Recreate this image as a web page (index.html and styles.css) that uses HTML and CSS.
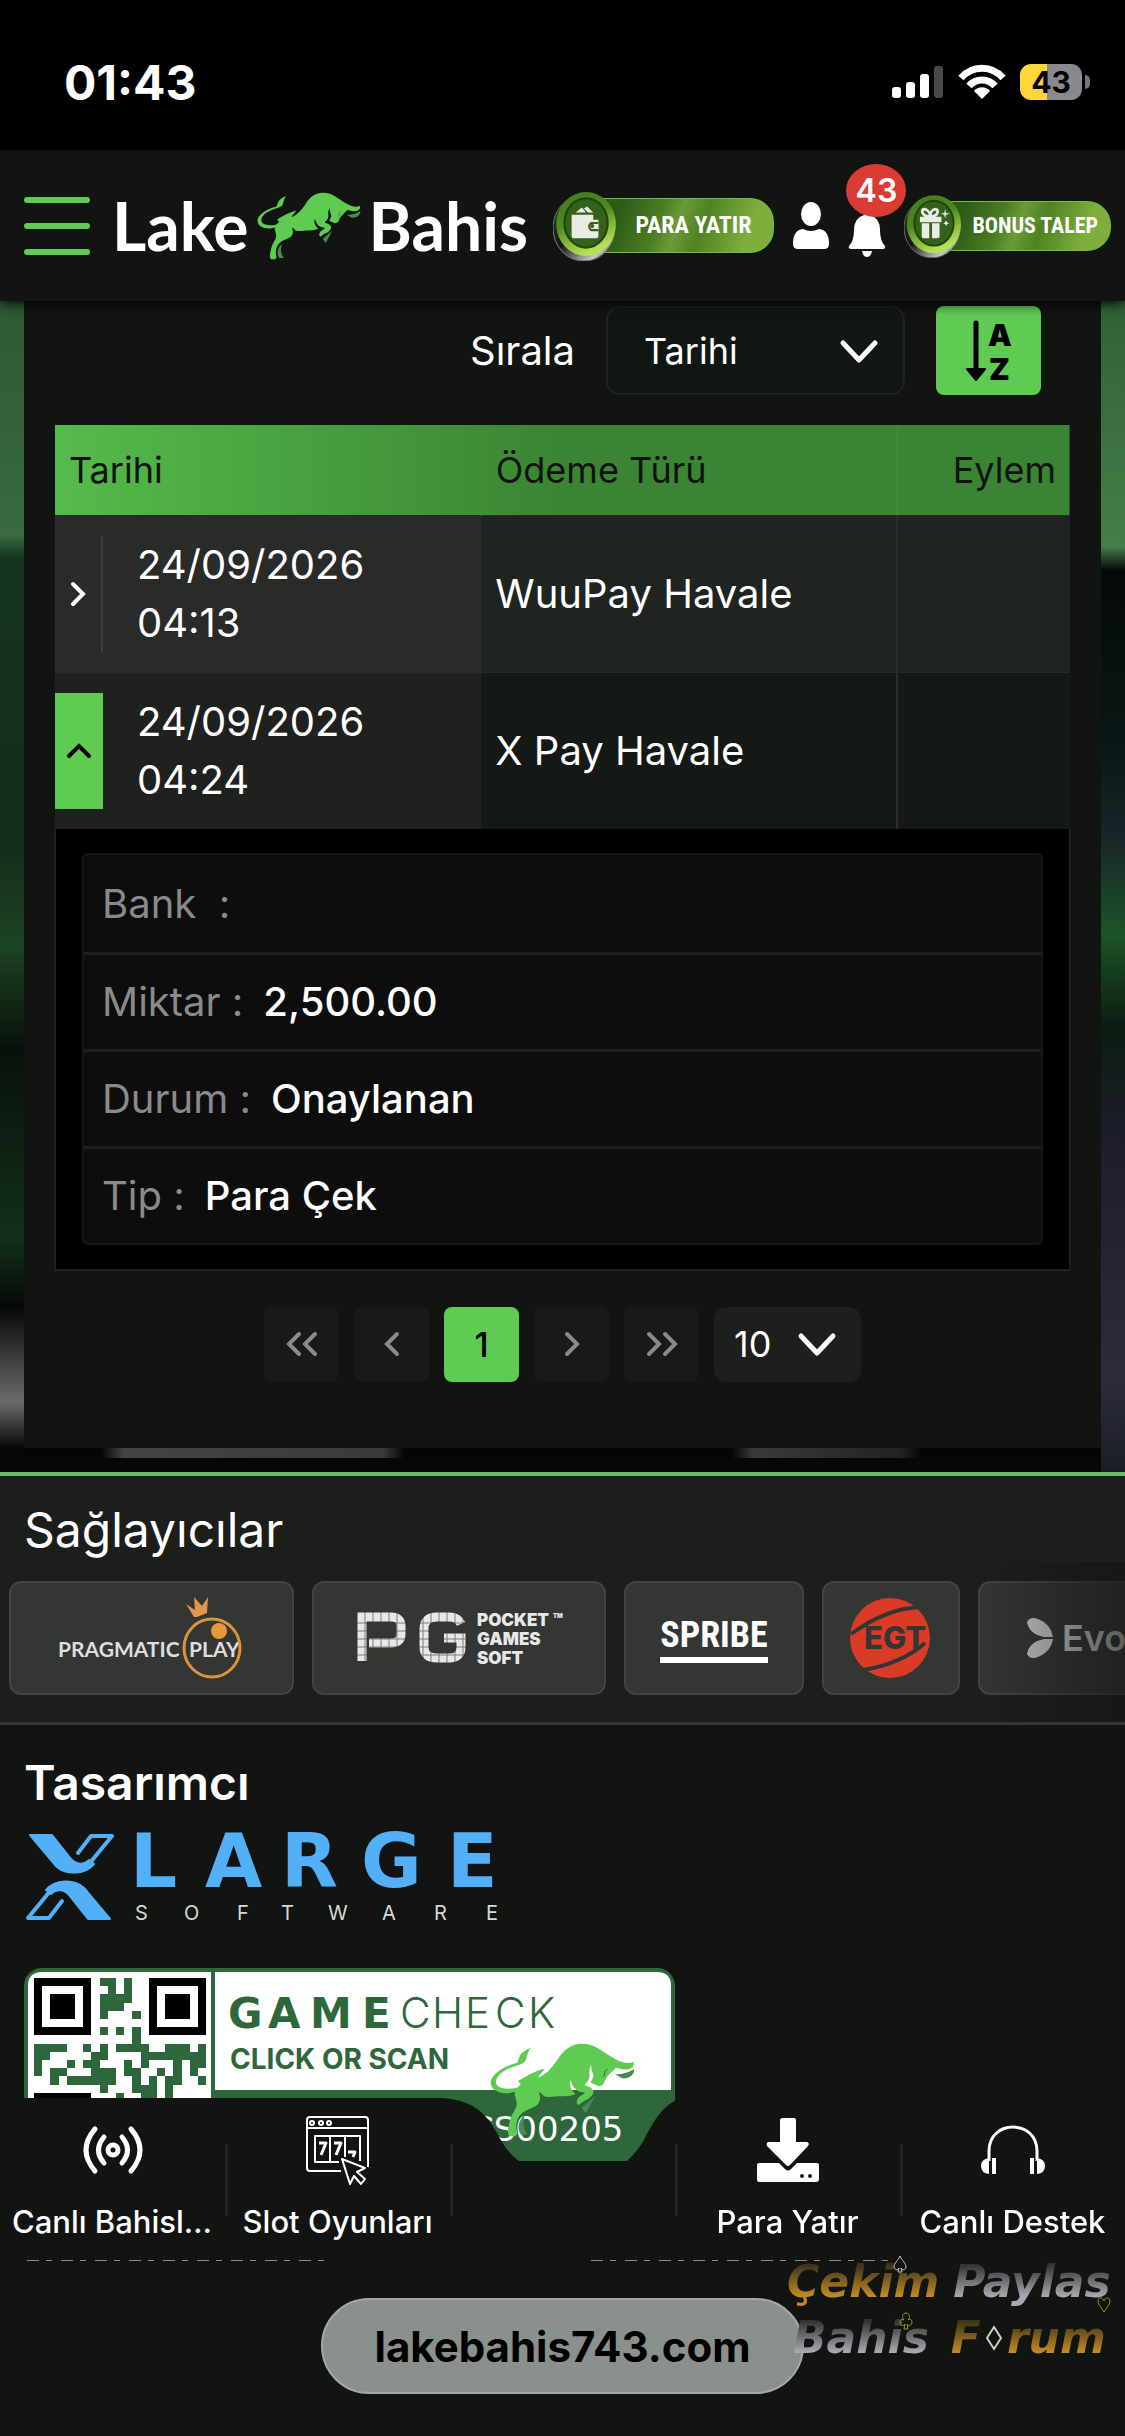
FILE: index.html
```html
<!DOCTYPE html>
<html lang="tr">
  <head>
    <meta charset="UTF-8" />
    <meta name="viewport" content="width=device-width, initial-scale=1.0" />
    <title>Lake Bahis - İşlem Geçmişi</title>
    <link rel="stylesheet" href="styles.css">
  </head>
  <body>
    <!-- shared shapes -->
    <svg class="sprite" aria-hidden="true">
      <symbol id="bull" viewBox="148 128 436 282">
        <g fill="#4b8a4f">
          <path d="M252 345C240 355 224 378 242 404L261 402C250 390 246 375 250 358Z" />
          <path d="M424 322L464 288L436 340Z" />
          <path d="M524 222C545 222 570 215 581 206C583 224 565 236 545 234Z" />
        </g>
        <g fill="#5fcb53">
          <path d="M270 143C258 147 243 156 237 168C234 176 230 184 231 187C200 194 160 213 151 240C146 264 168 281 205 279C222 276 235 270 245 258C225 266 200 268 180 262C163 255 162 240 174 226C187 210 212 200 237 193C248 188 254 186 257 176C259 165 263 152 270 143Z" />
          <path d="M232 242C262 224 285 211 313 204C306 213 298 222 292 232C318 224 338 197 352 176C370 148 392 130 425 130C462 130 484 152 508 166C525 176 540 186 558 188C568 188 575 187 580 184C583 198 574 206 558 207C545 208 536 204 526 202C518 214 500 224 494 240C490 252 484 259 474 257L452 248C450 240 462 234 458 222C455 212 450 205 454 194C443 206 448 220 447 230C446 240 440 246 434 250L434 256C445 258 460 264 459 275C457 290 437 300 430 302L414 314C407 310 407 300 414 292C422 284 434 282 432 276C410 276 395 262 391 238C385 255 392 272 405 280C395 288 370 288 350 288C335 290 322 292 310 288C304 282 302 276 294 276C302 290 299 305 290 314C275 324 250 330 238 345C228 358 224 375 230 400L225 408L206 408C198 395 204 380 207 365C210 345 225 330 228 315C230 300 222 290 222 275C226 262 240 256 240 250Z" />
        </g>
        <path d="M501 207C494 210 491 216 493 224L488 229" fill="none" stroke="#2d673b" stroke-width="3" />
      </symbol>
      <symbol id="chevron" viewBox="0 0 40 26">
        <path d="M4 4L20 21L36 4" fill="none" stroke="currentColor" stroke-width="5" stroke-linecap="round" stroke-linejoin="round" />
      </symbol>
      <linearGradient id="ring" x1="0" y1="0" x2="0.4" y2="1">
        <stop offset="0" stop-color="#3f7a1b" />
        <stop offset="0.5" stop-color="#4d8a1f" />
        <stop offset="1" stop-color="#b5e255" />
      </linearGradient>
      <linearGradient id="metal" x1="0" y1="0" x2="1" y2="1">
        <stop offset="0" stop-color="#2c4a1a" />
        <stop offset="0.45" stop-color="#141414" />
        <stop offset="0.8" stop-color="#c9c9c9" />
        <stop offset="1" stop-color="#222222" />
      </linearGradient>
      <symbol id="coin" viewBox="0 0 62 68">
        <ellipse cx="30" cy="36" rx="30" ry="32" fill="url(#metal)" stroke="#6d6d6d" stroke-width="1" />
        <ellipse cx="32" cy="32" rx="29" ry="31" fill="url(#ring)" />
        <ellipse cx="32" cy="31" rx="21" ry="24" fill="#35611a" stroke="#23420f" stroke-width="2" />
      </symbol>
    </svg>

    <div class="status-bar">
      <span class="clock">01:43</span>
      <div class="status-icons">
        <svg width="52" height="34" viewBox="0 0 52 34">
          <g fill="#fff">
            <rect x="0" y="22" width="9" height="11" rx="3" />
            <rect x="14" y="17" width="9" height="16" rx="3" />
            <rect x="28" y="9" width="9" height="24" rx="3" />
          </g>
          <rect x="42" y="1" width="9" height="32" rx="3" fill="#48484a" />
        </svg>
        <svg width="48" height="36" viewBox="0 0 48 36">
          <g fill="none" stroke="#fff" stroke-width="7">
            <path d="M3 14C14 1 34 1 45 14" />
            <path d="M11 22C18 14 30 14 37 22" />
          </g>
          <path d="M24 35L16 27C20 22 28 22 32 27Z" fill="#fff" />
        </svg>
        <div class="battery"><span>43</span></div>
      </div>
    </div>

    <header class="site-header">
      <button class="menu-btn" type="button" aria-label="Menü"><i></i><i></i><i></i></button>
      <a class="brand" href="#">
        <span>Lake</span>
        <svg width="104" height="70"><use href="#bull" /></svg>
        <span>Bahis</span>
      </a>
      <a class="promo" href="#">
        <svg class="coin" width="64" height="70" viewBox="0 0 62 68">
          <use href="#coin" width="62" height="68" />
          <path d="M18 23H39V28H44V44Q44 46 42 46H20Q18 46 18 43Z" fill="#e9ece6" />
          <path d="M22 21L28 16L32 21ZM30 17L33 15L39 21H34Z" fill="#e9ece6" />
          <path d="M44 31H37Q33 34 37 38H44" fill="#e9ece6" stroke="#35611a" stroke-width="2" />
          <circle cx="38" cy="34" r="2" fill="#35611a" />
        </svg>
        <span class="promo-label">PARA YATIR</span>
      </a>
      <a class="icon-link" href="#" aria-label="Profil">
        <svg width="38" height="48" viewBox="0 0 38 48">
          <g fill="#fff">
            <ellipse cx="19" cy="12" rx="10" ry="12" />
            <path d="M11 27Q19 31 27 27Q37 28 37 42Q37 47 32 47H6Q1 47 1 42Q1 28 11 27Z" />
          </g>
        </svg>
      </a>
      <a class="icon-link bell" href="#" aria-label="Bildirimler">
        <svg width="38" height="46" viewBox="0 0 38 46">
          <path d="M19 0Q22 0 22 3Q32 6 32 18Q32 29 37 34Q38 37 35 37H3Q0 37 1 34Q6 29 6 18Q6 6 16 3Q16 0 19 0ZM14 39H24Q23 45 19 45Q15 45 14 39Z" fill="#fff" />
        </svg>
        <span class="count">43</span>
      </a>
      <a class="promo promo-small" href="#">
        <svg class="coin" width="58" height="64" viewBox="0 0 62 68">
          <use href="#coin" width="62" height="68" />
          <g fill="#e9ece6">
            <path d="M17 24H40V30H17ZM19 31H27V47H21Q19 47 19 45ZM30 31H38V45Q38 47 36 47H30Z" />
            <path d="M44 16L45 20L49 21L45 22L44 26L43 22L39 21L43 20ZM45 28L46 30L48 31L46 32L45 34L44 32L42 31L44 30Z" />
          </g>
          <path d="M28 24C18 24 18 15 22 16C26 17 28 21 28 24C28 20 30 16 34 16C38 17 36 24 28 24" fill="none" stroke="#e9ece6" stroke-width="3" />
        </svg>
        <span class="promo-label">BONUS TALEP</span>
      </a>
    </header>

    <main class="stage">
      <section class="history">
        <form class="sort-row">
          <label for="sort">Sırala</label>
          <div class="select-box sort-select">
            <select id="sort"><option>Tarihi</option></select>
            <svg width="40" height="26"><use href="#chevron" /></svg>
          </div>
          <button class="sort-btn" type="button" aria-label="A'dan Z'ye sırala">
            <svg width="46" height="62" viewBox="0 0 46 62">
              <path d="M10 3V51" stroke="#000" stroke-width="5" stroke-linecap="round" />
              <path d="M1 49H19L10 60Z" fill="#000" stroke="#000" stroke-width="2" stroke-linejoin="round" />
              <text x="22" y="26">A</text>
              <text x="23" y="60">Z</text>
            </svg>
          </button>
        </form>

        <table class="payments">
          <thead>
            <tr>
              <th class="col-date">Tarihi</th>
              <th class="col-type">Ödeme Türü</th>
              <th class="col-action">Eylem</th>
            </tr>
          </thead>
          <tbody>
            <tr class="row-odd">
              <td>
                <div class="date-cell">
                  <button class="toggle" type="button" aria-label="Aç">
                    <svg width="18" height="28" viewBox="0 0 18 28"><path d="M4 4L14 14L4 24" /></svg>
                  </button>
                  <span>24/09/2026<br>04:13</span>
                </div>
              </td>
              <td class="type">WuuPay Havale</td>
              <td></td>
            </tr>
            <tr class="row-even">
              <td>
                <div class="date-cell">
                  <button class="toggle open" type="button" aria-label="Kapat">
                    <svg width="28" height="18" viewBox="0 0 28 18"><path d="M4 14L14 4L24 14" /></svg>
                  </button>
                  <span>24/09/2026<br>04:24</span>
                </div>
              </td>
              <td class="type">X Pay Havale</td>
              <td></td>
            </tr>
            <tr>
              <td class="detail" colspan="3">
                <dl>
                  <div><dt>Bank &nbsp;:</dt><dd></dd></div>
                  <div><dt>Miktar :</dt><dd>2,500.00</dd></div>
                  <div><dt>Durum :</dt><dd>Onaylanan</dd></div>
                  <div><dt>Tip :</dt><dd>Para Çek</dd></div>
                </dl>
              </td>
            </tr>
          </tbody>
        </table>

        <div class="pager">
          <button type="button" aria-label="İlk"><svg width="34" height="26" viewBox="0 0 34 26"><path d="M14 3L4 13L14 23M30 3L20 13L30 23" /></svg></button>
          <button type="button" aria-label="Önceki"><svg width="18" height="26" viewBox="0 0 18 26"><path d="M14 3L4 13L14 23" /></svg></button>
          <button type="button" class="current">1</button>
          <button type="button" aria-label="Sonraki"><svg width="18" height="26" viewBox="0 0 18 26"><path d="M4 3L14 13L4 23" /></svg></button>
          <button type="button" aria-label="Son"><svg width="34" height="26" viewBox="0 0 34 26"><path d="M4 3L14 13L4 23M20 3L30 13L20 23" /></svg></button>
          <div class="select-box page-size">
            <select aria-label="Sayfa boyutu"><option>10</option></select>
            <svg width="40" height="26"><use href="#chevron" /></svg>
          </div>
        </div>
      </section>
    </main>

    <section class="providers">
      <h2>Sağlayıcılar</h2>
      <div class="provider-list">
        <a class="provider pragmatic" href="#">
          <svg width="188" height="82" viewBox="0 0 188 82">
            <text x="0" y="60" class="pr-text">PRAGMATIC</text>
            <text x="131" y="60" class="pr-text">PLAY</text>
            <ellipse cx="154" cy="51" rx="28" ry="29" fill="none" stroke="#d8933c" stroke-width="3" />
            <circle cx="161" cy="34" r="8" fill="#e8983a" />
            <path d="M136 20L128 7L137 13L136 0L144 9L150 0L149 16L139 20Z" fill="#e39549" />
          </svg>
        </a>
        <a class="provider pg" href="#">
          <svg width="204" height="54" viewBox="0 0 204 54">
            <path d="M5 50V6H34Q44 6 44 15V23Q44 32 34 32H12" class="pg-mark" />
            <path d="M104 13Q101 6 92 6H80Q67 6 67 18V36Q67 47 80 47H92Q104 47 104 36V27H87" class="pg-mark" />
            <path d="M0 12H110M0 20H110M0 28H110M0 36H110M0 44H110M8 0V54M16 0V54M24 0V54M32 0V54M40 0V54M66 0V54M74 0V54M82 0V54M90 0V54M98 0V54M106 0V54" stroke="#343633" stroke-width="1" opacity="0.6" />
            <text x="120" y="15">POCKET</text>
            <text x="120" y="34">GAMES</text>
            <text x="120" y="53">SOFT</text>
            <text x="196" y="7" class="tm">TM</text>
          </svg>
        </a>
        <a class="provider spribe" href="#">
          <span>SPRIBE</span>
        </a>
        <a class="provider egt" href="#">
          <svg width="84" height="84" viewBox="0 0 84 84">
            <circle cx="41" cy="42" r="40" fill="#d93b27" />
            <path d="M2 38Q38 12 72 11M14 74Q52 68 76 47" fill="none" stroke="#343633" stroke-width="4" />
            <text x="15" y="53">EGT</text>
          </svg>
        </a>
        <a class="provider evolution" href="#">
          <svg width="28" height="42" viewBox="0 0 28 42">
            <path d="M1 5Q4 -1 12 2Q25 7 27 20H18Q3 17 1 5ZM1 37Q4 43 12 40Q25 35 27 22H18Q3 25 1 37Z" fill="#c9cbc9" />
          </svg>
          <span>Evolution</span>
        </a>
      </div>
    </section>

    <footer class="site-footer">
      <h2>Tasarımcı</h2>
      <a class="xlarge" href="#" aria-label="XLarge Software">
        <svg width="478" height="88" viewBox="0 0 478 88">
          <g id="xhalf">
            <path d="M3 1H25L44 25C49 31 57 31 62 26L67 30C58 41 38 41 29 32Z" fill="#52b0f8" stroke="#52b0f8" stroke-width="2" stroke-linejoin="round" />
            <path d="M51 19L64 2H85L62 30" fill="none" stroke="#52b0f8" stroke-width="4" stroke-linecap="round" stroke-linejoin="round" />
          </g>
          <use href="#xhalf" transform="rotate(180 43 43)" />
          <text class="xl-name" x="103 178 254 334 420" y="53">LARGE</text>
          <text class="xl-sub" x="108 157 210 254 301 355 407 459" y="86">SOFTWARE</text>
        </svg>
      </a>
      <a class="gamecheck" href="#" aria-label="GameCheck">
        <svg width="651" height="210" viewBox="0 0 651 210">
          <rect width="651" height="210" rx="18" fill="#2d673b" />
          <path d="M4 200V18Q4 4 18 4H187V200Z" fill="#fff" />
          <path d="M191 4H633Q647 4 647 18V122H191Z" fill="#fff" />
          <!-- one unit per QR module -->
          <g transform="translate(10 10) scale(8.2)" shape-rendering="crispEdges">
            <path d="M0 0H7V7H0ZM14 0H21V7H14ZM0 14H7V21H0Z" fill="#000" />
            <path d="M1 1H6V6H1ZM15 1H20V6H15Z" fill="#fff" />
            <path d="M2 2H5V5H2ZM16 2H19V5H16Z" fill="#000" />
            <path fill="#2d673b" d="M8 0h2v1h-2zM11 0h1v1h-1zM9 1h1v1h-1zM11 1h1v1h-1zM8 2h4v1h-4zM8 3h3v1h-3zM8 4h1v1h-1zM12 4h1v1h-1zM8 6h1v1h-1zM10 6h1v1h-1zM12 6h1v2h-1zM0 8h4v1h-4zM6 8h1v1h-1zM8 8h1v1h-1zM10 8h4v1h-4zM16 8h3v1h-3zM20 8h1v1h-1zM0 9h2v1h-2zM7 9h2v1h-2zM13 9h8v1h-8zM0 10h1v2h-1zM4 10h1v1h-1zM6 10h2v1h-2zM11 10h1v1h-1zM13 10h1v1h-1zM17 10h1v1h-1zM19 10h2v1h-2zM2 11h2v1h-2zM7 11h3v1h-3zM11 11h2v1h-2zM15 11h1v1h-1zM17 11h1v1h-1zM19 11h1v1h-1zM2 12h1v1h-1zM4 12h6v1h-6zM12 12h1v1h-1zM14 12h1v1h-1zM16 12h2v1h-2zM20 12h1v1h-1zM8 13h1v1h-1zM12 13h3v1h-3zM16 13h1v1h-1zM10 14h1v1h-1zM13 14h2v1h-2zM16 14h1v1h-1z" />
          </g>
          <text class="gc-bold" x="204 244 286 338" y="60">GAME</text>
          <text class="gc-thin" x="376 408 441 471 504" y="60">CHECK</text>
          <text class="gc-sub" x="206" y="101">CLICK OR SCAN</text>
          <text class="gc-code" x="446" y="173">CS00205</text>
        </svg>
      </a>
    </footer>

    <div class="dock">
      <div class="dock-shape">
        <div></div>
        <svg width="244" height="338" viewBox="0 0 244 338">
          <path d="M0 0C40 2 50 24 61 44Q68 56 78 63H186Q196 54 203 42C212 24 224 2 244 0V338H0Z" fill="#111411" />
        </svg>
        <div></div>
      </div>
      <nav class="dock-nav">
        <a href="#">
          <svg width="60" height="48" viewBox="0 0 60 48">
            <g fill="none" stroke="#fff" stroke-width="5" stroke-linecap="round">
              <circle cx="30" cy="24" r="5" />
              <path d="M12 3Q-6 24 12 45M21 11Q10 24 21 37M48 3Q66 24 48 45M39 11Q50 24 39 37" />
            </g>
          </svg>
          <span>Canlı Bahisleri</span>
        </a>
        <a href="#">
          <svg width="66" height="70" viewBox="0 0 66 70">
            <g fill="none" stroke="#fff" stroke-width="2" stroke-linejoin="round">
              <path d="M36 56H5Q2 56 2 53V5Q2 2 5 2H60Q63 2 63 5V52M2 13H63" />
              <circle cx="7" cy="8" r="2" /><circle cx="16" cy="8" r="2" /><circle cx="24" cy="8" r="2" />
              <path d="M34 47H10V21H55V46M25 21V47M40 21V42" />
              <path d="M14 28H21L16 40M29 28H36L31 40M43 37H50L48 42" stroke-width="3" />
              <path d="M37 44L60 53L52 57L60 64L56 69L49 61L45 69Z" />
            </g>
          </svg>
          <span>Slot Oyunları</span>
        </a>
        <a class="home" href="#" aria-label="Ana sayfa">
          <svg width="145" height="94"><use href="#bull" /></svg>
        </a>
        <a href="#">
          <svg width="64" height="66" viewBox="0 0 64 66">
            <path d="M27 1H38Q40 1 40 3V25H51Q54 26 52 29L34 48Q32 50 30 48L11 29Q10 26 12 25H24V3Q24 1 27 1Z" fill="#fff" />
            <path d="M3 46H23L29 52Q32 55 35 52L41 46H61Q63 46 63 48V62Q63 65 60 65H3Q1 65 1 62V48Q1 46 3 46Z" fill="#fff" />
            <circle cx="46" cy="59" r="2" fill="#111411" /><circle cx="54" cy="59" r="2" fill="#111411" />
          </svg>
          <span>Para Yatır</span>
        </a>
        <a href="#">
          <svg width="66" height="50" viewBox="0 0 66 50">
            <path d="M9 36V26C9 -6 57 -6 57 26V36" fill="none" stroke="#fff" stroke-width="3" />
            <path d="M9 33Q1 34 1 41Q1 48 9 49ZM12 33H16V49H12ZM57 33Q65 34 65 41Q65 48 57 49ZM50 33H54V49H50Z" fill="#fff" />
          </svg>
          <span>Canlı Destek</span>
        </a>
      </nav>
      <div class="peek"><i></i><i></i></div>
      <div class="url-bar"><button type="button">lakebahis743.com</button></div>
      <div class="forum-mark">
        <p><span class="gold">Çekim</span><span class="silver">Paylas</span></p>
        <p class="forum-line">
          <span class="silver">Bahis</span>
          <span class="gold forum-f">F</span>
          <svg width="18" height="26" viewBox="0 0 18 26"><path d="M9 2L16 13L9 24L2 13Z" fill="none" stroke="#d9c9c9" stroke-width="2" /></svg>
          <span class="gold">rum</span>
        </p>
        <svg class="suit spade" width="14" height="18" viewBox="0 0 14 18"><path d="M7 1C9 6 13 8 13 12C13 15 9 16 8 13L9 17H5L6 13C5 16 1 15 1 12C1 8 5 6 7 1Z" /></svg>
        <svg class="suit club" width="14" height="18" viewBox="0 0 14 18"><path d="M8 12L9 17H5L6 12C4 15 1 13 1 10C1 7 4 7 5 8C2 5 4 1 7 1C10 1 12 5 9 8C10 7 13 7 13 10C13 13 10 15 8 12Z" /></svg>
        <svg class="suit heart" width="14" height="18" viewBox="0 0 14 18"><path d="M7 16C5 12 1 9 1 5C1 1 6 1 7 5C8 1 13 1 13 5C13 9 9 12 7 16Z" /></svg>
      </div>
    </div>
  </body>
</html>
```

FILE: styles.css
```css
* {
  box-sizing: border-box;
}

body {
  margin: 0;
  min-height: 100vh;
  display: flex;
  flex-direction: column;
  background-color: #111411;
  color: white;
  font-family: "Inter", sans-serif;
  font-size: 40px;
  overflow-x: hidden;
}

a {
  color: inherit;
  text-decoration: none;
}

button,
select {
  font: inherit;
  color: inherit;
  border: none;
  padding: 0;
  cursor: pointer;
}

svg {
  display: block;
  flex-shrink: 0;
  overflow: visible;
}

h2,
p {
  margin: 0;
}

.sprite {
  position: absolute;
  width: 0;
  height: 0;
}

/* Phone status bar */
.status-bar {
  height: 150px;
  padding: 14px 36px 0 64px;
  background: black;
  display: flex;
  justify-content: space-between;
  align-items: center;
}

.clock {
  font-size: 48px;
  font-weight: 700;
}

.status-icons {
  display: flex;
  align-items: center;
  gap: 14px;
}

.battery {
  position: relative;
  width: 62px;
  height: 36px;
  margin-right: 7px;
  border-radius: 11px;
  background: linear-gradient(90deg, #fdd63c 43%, #8a8a8e 43%);
  color: black;
  font-size: 30px;
  font-weight: 700;
  line-height: 36px;
  text-align: center;
}

.battery::after {
  content: "";
  position: absolute;
  right: -8px;
  top: 11px;
  width: 5px;
  height: 14px;
  border-radius: 0 6px 6px 0;
  background: #77777a;
}

/* Header */
.site-header {
  position: relative;
  z-index: 1;
  height: 151px;
  padding: 0 14px 0 24px;
  background: #111411;
  box-shadow: 0 2px 12px black;
  display: flex;
  align-items: center;
}

.menu-btn {
  width: 66px;
  flex-shrink: 0;
  background: none;
  display: flex;
  flex-direction: column;
  gap: 20px;
}

.menu-btn i {
  height: 6px;
  border-radius: 3px;
  background: #5fcb53;
}

.brand {
  margin-left: 22px;
  display: flex;
  align-items: center;
  gap: 8px;
  font-family: "Lato", sans-serif;
  font-size: 66px;
  font-weight: 700;
  line-height: 80px;
}

.promo {
  display: flex;
  align-items: center;
  margin-left: auto;
}

.coin {
  position: relative;
  z-index: 1;
  margin-right: -36px;
}

.promo-label {
  height: 55px;
  padding: 0 22px 0 54px;
  border-radius: 0 24px 24px 0;
  border: 1px solid #6fc04a;
  border-left: none;
  background: linear-gradient(110deg, #2f5a18 20%, #4a7d22 40%, #6b9a38 50%, #4f8222 62%, #7fae3c 85%);
  font-family: "Roboto Condensed", "Liberation Sans Narrow", "Liberation Sans", sans-serif;
  font-size: 24px;
  font-weight: 700;
  line-height: 53px;
  white-space: nowrap;
}

.promo-small {
  margin-left: 18px;
}

.promo-small .promo-label {
  height: 50px;
  padding: 0 12px 0 46px;
  font-size: 22px;
  line-height: 48px;
}

.icon-link {
  position: relative;
  margin-left: 18px;
}

.bell {
  padding-top: 18px;
}

.count {
  position: absolute;
  left: -2px;
  bottom: 41px;
  width: 60px;
  height: 53px;
  border-radius: 50%;
  background: #da3b32;
  font-size: 32px;
  font-weight: 600;
  line-height: 53px;
  text-align: center;
}

/* Payment history */
.stage {
  padding: 0 24px 24px;
  background:
    linear-gradient(#2c5a32, #3a6a42 20%, #15351f 22%, #142c1b 46%, #1d4322 55%, #08110b 64%, #12301b 80%, #050805 86%, #6b6c69 94%, #050805 98%) left / 24px 100% no-repeat,
    linear-gradient(#2f6136, #477d4a 21%, #050a06 23%, #0a1716 38%, #18262a 46%, #1d5427 54%, #0c1c11 62%, #1d1d2c 72%, #2c2b3c 92%, #1b1e25) right / 24px 100% no-repeat,
    linear-gradient(90deg, #050505 9%, #444 11%, #3a3a3a 34%, #050505 36%, #050505 65%, #3a3a3a 67%, #222 80%, #050505 82%) left bottom 14px / 100% 10px no-repeat,
    #050805;
}

.history {
  padding: 5px 30px 66px;
  background: #111411;
}

.sort-row {
  display: flex;
  justify-content: flex-end;
  align-items: center;
  gap: 31px;
  margin: 0 30px 30px 0;
}

.select-box {
  position: relative;
}

.select-box select {
  width: 100%;
  height: 100%;
  appearance: none;
  background: none;
}

.select-box svg {
  position: absolute;
  top: 50%;
  margin-top: -12px;
  pointer-events: none;
}

.sort-select {
  width: 299px;
  height: 89px;
  border: 2px solid #1e231f;
  border-radius: 14px;
  background: #101611;
}

.sort-select select {
  padding-left: 36px;
  font-size: 36px;
}

.sort-select svg {
  right: 24px;
}

.sort-btn {
  width: 105px;
  height: 89px;
  border-radius: 8px;
  background: #5fcb53;
  display: flex;
  justify-content: center;
  align-items: center;
}

.sort-btn text {
  font-size: 30px;
  font-weight: 900;
}

.payments {
  width: 100%;
  table-layout: fixed;
  border-collapse: collapse;
}

.payments thead {
  background: linear-gradient(90deg, #55bb4b, #3b8433 50%);
}

.payments th {
  height: 90px;
  padding: 0 14px;
  color: #101410;
  font-size: 36px;
  font-weight: 400;
  text-align: left;
}

.payments th + th {
  border-left: 1px solid #438f3b;
}

.payments .col-date {
  width: 42%;
}

.payments .col-action {
  width: 17%;
  text-align: right;
}

.payments td {
  padding: 0;
}

.row-odd {
  background: #202421;
}

.row-odd td:first-child {
  background: #292b28;
}

.row-even {
  background: #151915;
}

.row-even td:first-child {
  background: #1f211e;
}

.row-odd td,
.row-even td {
  border-top: 1px solid #272a27;
}

.payments td:nth-child(3) {
  border-left: 2px solid #2a2d2a;
}

.payments .type {
  padding-left: 14px;
}

.date-cell {
  padding: 20px 0;
  display: flex;
  gap: 34px;
  font-size: 40px;
  line-height: 58px;
}

.toggle {
  width: 48px;
  border-right: 2px solid #3c3f3c;
  background: none;
  display: flex;
  justify-content: center;
  align-items: center;
}

.toggle svg,
.pager button svg {
  fill: none;
  stroke: currentColor;
  stroke-width: 4;
  stroke-linecap: round;
}

.toggle.open {
  border: none;
  background: #5fcb53;
  color: black;
}

.payments .detail {
  padding: 24px 26px;
  border: 2px solid #1f211f;
  border-top: none;
  background: black;
}

.detail dl {
  margin: 0;
  border: 2px solid #171717;
  border-radius: 6px;
  background: #0d0d0d;
}

.detail dl div {
  height: 97px;
  padding: 0 18px;
  display: flex;
  align-items: center;
  gap: 20px;
}

.detail dl div + div {
  border-top: 3px solid #1e1e1e;
}

.detail dt {
  color: #8a8a8a;
}

.detail dd {
  margin: 0;
  font-weight: 500;
}

.pager {
  margin-top: 36px;
  display: flex;
  justify-content: center;
  gap: 15px;
}

.pager button {
  width: 75px;
  height: 75px;
  border-radius: 8px;
  background: #171a17;
  color: #8a8a8a;
  display: flex;
  justify-content: center;
  align-items: center;
}

.pager .current {
  background: #5fcb53;
  color: black;
  font-size: 34px;
  font-weight: 500;
}

.page-size {
  width: 147px;
  height: 75px;
  border-radius: 12px;
  background: #1d1f1d;
}

.page-size select {
  padding-left: 20px;
  font-size: 36px;
}

.page-size svg {
  right: 24px;
}

/* Providers */
.providers {
  padding-top: 22px;
  border-top: 4px solid #69bb68;
  border-bottom: 3px solid #343633;
  background: #1c1e1b;
}

.providers h2 {
  padding-left: 24px;
  font-size: 48px;
  font-weight: 400;
  line-height: 64px;
}

.provider-list {
  position: relative;
  overflow: hidden;
  padding: 19px 0 27px 9px;
  display: flex;
  gap: 18px;
}

.provider-list::after {
  content: "";
  position: absolute;
  right: 0;
  top: 0;
  bottom: 0;
  width: 150px;
  background: linear-gradient(90deg, transparent, rgba(17, 20, 17, 0.6));
}

.provider {
  flex-shrink: 0;
  height: 114px;
  border: 2px solid #424441;
  border-radius: 12px;
  background: #343633;
  display: flex;
  justify-content: center;
  align-items: center;
}

.pragmatic {
  width: 285px;
}

.pr-text {
  fill: #dedede;
  font-size: 21px;
  font-family: "Lato", sans-serif;
  font-weight: 700;
}

.pg {
  width: 294px;
}

.pg-mark {
  fill: none;
  stroke: #e8e8e8;
  stroke-width: 9;
}

.pg text {
  fill: #e8e8e8;
  font-size: 17px;
  font-weight: 900;
}

.pg .tm {
  font-size: 6px;
}

.spribe {
  width: 180px;
}

.spribe span {
  border-bottom: 6px solid white;
  font-family: "Roboto Condensed", "Liberation Sans Narrow", "Liberation Sans", sans-serif;
  font-size: 36px;
  font-weight: 700;
  line-height: 44px;
}

.egt {
  width: 138px;
}

.egt text {
  fill: #343633;
  font-size: 31px;
  font-weight: 800;
}

.evolution {
  width: 260px;
  padding-left: 46px;
  justify-content: flex-start;
  gap: 8px;
  color: #c9cbc9;
  font-size: 36px;
  font-weight: 600;
}

/* Footer */
.site-footer {
  flex: 1;
  padding: 26px 24px 0;
}

.site-footer h2 {
  font-size: 48px;
  font-weight: 600;
  line-height: 64px;
}

.xlarge {
  display: block;
  width: 478px;
  margin: 19px 0 0 3px;
}

.xl-name {
  fill: #52b0f8;
  font-family: "DejaVu Sans", sans-serif;
  font-size: 74px;
  font-weight: 700;
}

.xl-sub {
  fill: #d8d8d8;
  font-size: 20px;
}

.gamecheck {
  display: block;
  width: 651px;
  margin-top: 46px;
}

.gc-bold,
.gc-thin,
.gc-sub {
  fill: #2d673b;
  font-size: 42px;
}

.gc-bold {
  font-family: "DejaVu Sans", sans-serif;
  font-weight: 700;
}

.gc-thin {
  font-weight: 300;
}

.gc-sub {
  font-size: 28px;
  font-weight: 700;
}

.gc-code {
  fill: white;
  font-family: "DejaVu Sans", sans-serif;
  font-size: 34px;
}

/* Bottom dock, lies over the footer */
.dock {
  position: fixed;
  left: 0;
  right: 0;
  bottom: 0;
  z-index: 2;
  height: 338px;
}

.dock-shape {
  position: absolute;
  inset: 0;
  display: grid;
  grid-template-columns: 1fr 244px 1fr;
}

.dock-shape div {
  background: #111411;
}

.dock-nav {
  position: relative;
  height: 162px;
  display: grid;
  grid-template-columns: repeat(5, 1fr);
}

.dock-nav a {
  position: relative;
  min-width: 0;
  height: 144px;
  padding: 0 12px;
  display: grid;
  grid-template-rows: 104px 40px;
  grid-template-columns: 100%;
  place-items: center;
  font-size: 31px;
  font-weight: 500;
  line-height: 40px;
}

.dock-nav a + a::before {
  content: "";
  position: absolute;
  left: 0;
  top: 46px;
  width: 3px;
  height: 72px;
  background: #212421;
}

.dock-nav span {
  max-width: 100%;
  overflow: hidden;
  text-overflow: ellipsis;
  white-space: nowrap;
}

.home svg {
  position: absolute;
  left: 40px;
  top: -55px;
}

.peek {
  position: relative;
  display: flex;
  gap: 264px;
  padding-left: 27px;
}

.peek i {
  width: 300px;
  height: 1px;
  background: repeating-linear-gradient(90deg, #8a8c8a 0 12px, #111411 12px 19px, #8a8c8a 19px 25px, #111411 25px 34px);
}

.url-bar {
  position: relative;
  margin-top: 37px;
  display: flex;
  justify-content: center;
}

.url-bar button {
  height: 96px;
  padding: 0 52px;
  border-radius: 48px;
  border: 2px solid #a3aaa4;
  background: #8a908b;
  color: black;
  font-size: 42px;
  font-weight: 700;
}

.forum-mark {
  position: absolute;
  right: 4px;
  top: 156px;
  width: 334px;
  font-family: "DejaVu Sans", sans-serif;
  font-size: 44px;
  font-style: italic;
  font-weight: 700;
  line-height: 56px;
}

.forum-mark p {
  display: flex;
  align-items: center;
  gap: 14px;
}

.forum-mark .forum-line {
  padding-left: 6px;
  gap: 4px;
}

.forum-f {
  margin-left: 18px;
}

.gold,
.silver {
  background: linear-gradient(#3d3318 20%, #c08a26 75%);
  -webkit-background-clip: text;
  background-clip: text;
  color: transparent;
}

.silver {
  background-image: linear-gradient(#343436 20%, #aba6b0 75%);
}

.suit {
  position: absolute;
  fill: none;
  stroke: #9c9c14;
}

.spade {
  left: 106px;
  top: 1px;
  stroke: #d0c4c4;
}

.club {
  left: 112px;
  top: 58px;
}

.heart {
  right: 10px;
  top: 42px;
}
```
